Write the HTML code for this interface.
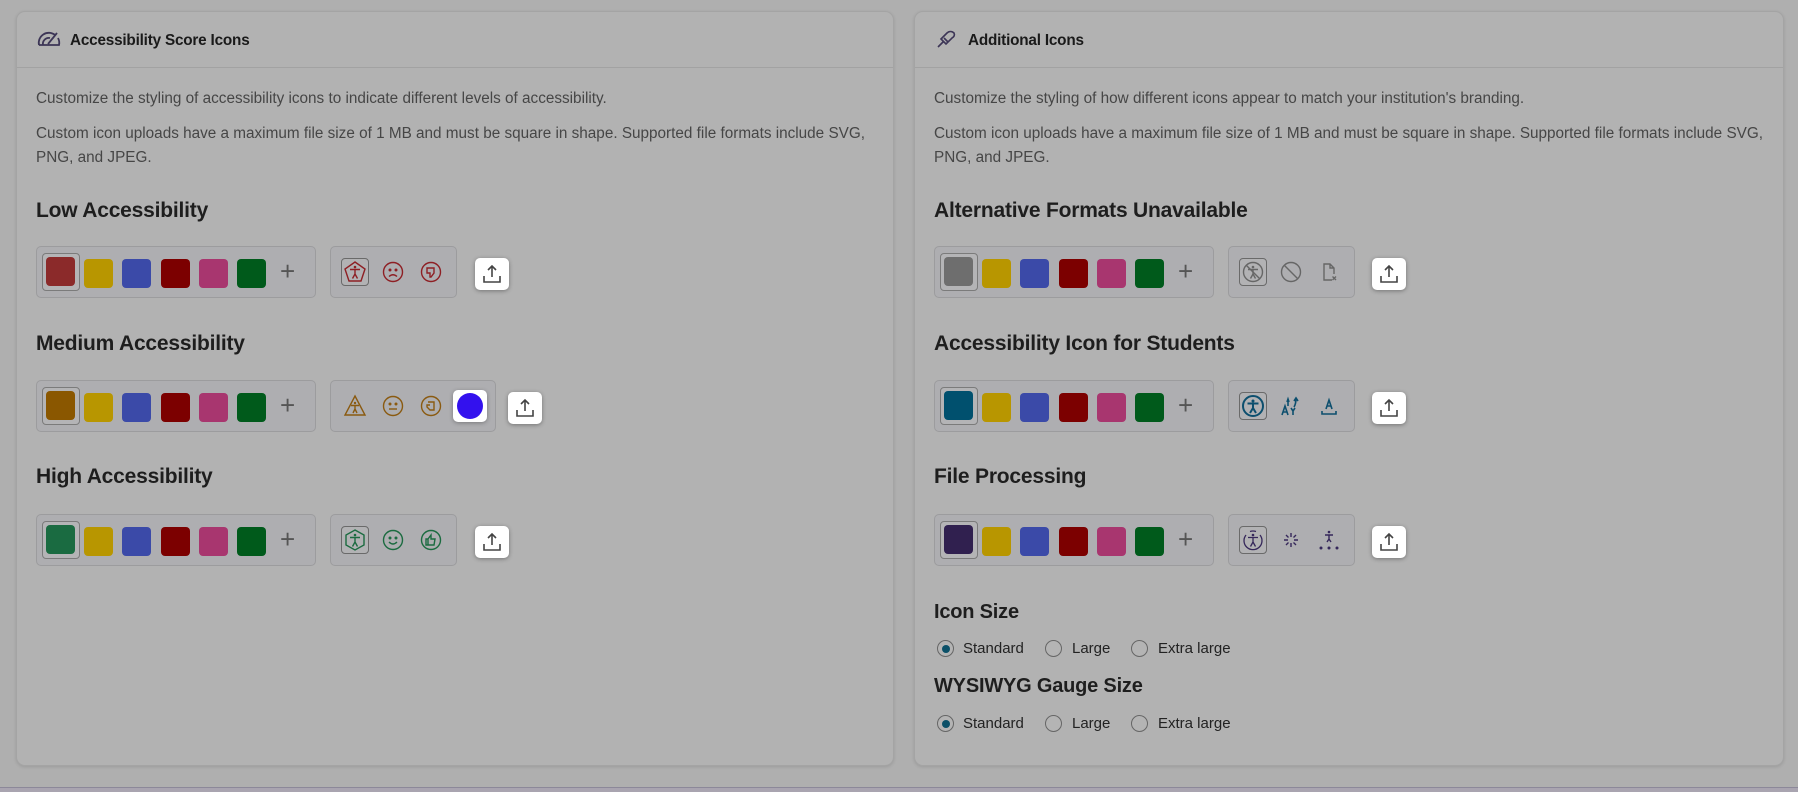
<!DOCTYPE html>
<html><head><meta charset="utf-8"><style>
*{box-sizing:border-box;margin:0;padding:0}
body{width:1798px;height:792px;background:#afafaf;font-family:"Liberation Sans",sans-serif;position:relative;overflow:hidden}
.card{position:absolute;top:11px;height:755px;background:#b2b2b2;border:1px solid #a4a4a4;border-radius:9px;box-shadow:0 1px 3px rgba(0,0,0,.12)}
.hdr{height:56px;border-bottom:1px solid #a2a2a2;position:relative}
.hdr .t{position:absolute;left:53px;top:20px;font-size:15.3px;font-weight:bold;color:#1a1a1a;letter-spacing:-.2px}
.hdr svg{position:absolute;left:20px;top:17px}
.a{position:absolute;color:#464646;font-size:15.3px;line-height:24px}
.h{position:absolute;font-size:21px;font-weight:bold;color:#1e1e1e;letter-spacing:-.2px}
.row{position:absolute;height:52px;border:1.5px solid #9c9c9e;border-radius:5px;background:#aeaeb1}
.sw{position:absolute;top:12px;width:29px;height:29px;border-radius:4px}
.sel{position:absolute;left:5px;top:6px;width:38px;height:38px;border:1.5px solid #7b7b7b;border-radius:4px;background:#b4b4b6}
.plus{position:absolute;top:9px;font-size:26px;color:#555;font-weight:300}
.up{position:absolute;width:34px;height:32px;background:#fff;border-radius:5px;box-shadow:0 1px 4px rgba(0,0,0,.35)}
.up svg{position:absolute;left:8px;top:6px}
.ic{position:absolute;top:13px}
.isel{position:absolute;left:10px;top:12px;width:28px;height:28px;border:1.5px solid #6a6a6a;border-radius:4px;background:#b2b2b4}
.rad{position:absolute;font-size:15px;color:#222;height:20px}
.rad span{position:absolute;top:0;line-height:18px;white-space:nowrap}
.rad i{position:absolute;top:0;width:17px;height:17px;border:1px solid #666;border-radius:50%;background:#b4b4b4}
.rad i.on::after{content:"";position:absolute;left:3.5px;top:3.5px;width:8px;height:8px;border-radius:50%;background:#0b5068}
.bot{position:absolute;left:0;top:787px;width:1798px;height:5px;background:#a9a4b0;border-top:1px solid #8c8899}
</style></head><body>

<div class="card" style="left:16px;width:878px">
 <div class="hdr"><svg width="24" height="18" viewBox="0 0 24 18" fill="none" stroke="#3c3556" stroke-width="1.8"><path d="M2 16 A10 10 0 0 1 18 6"/><path d="M6 16 A6 6 0 0 1 13 9"/><path d="M11 15 L20 4"/><path d="M21 9 A10 10 0 0 1 22 16 L2 16"/></svg><div class="t">Accessibility Score Icons</div></div>
</div>
<div class="card" style="left:914px;width:870px">
 <div class="hdr"><svg width="22" height="20" viewBox="0 0 22 20" fill="none" stroke="#3c3556" stroke-width="1.6"><path d="M3 18 L8 13 M6 10 L12 4 C14 2 17 2 19 4 C20 6 19 8 17 9 L11 15 Z M9 9 L13 13"/></svg><div class="t">Additional Icons</div></div>
</div>

<div class="a" style="left:36px;top:87px">Customize the styling of accessibility icons to indicate different levels of accessibility.</div>
<div class="a" style="left:36px;top:122px;width:850px">Custom icon uploads have a maximum file size of 1 MB and must be square in shape. Supported file formats include SVG, PNG, and JPEG.</div>
<div class="a" style="left:934px;top:87px">Customize the styling of how different icons appear to match your institution's branding.</div>
<div class="a" style="left:934px;top:122px;width:845px">Custom icon uploads have a maximum file size of 1 MB and must be square in shape. Supported file formats include SVG, PNG, and JPEG.</div>

<div class="h" style="left:36px;top:199px">Low Accessibility</div>
<div class="h" style="left:36px;top:332px">Medium Accessibility</div>
<div class="h" style="left:36px;top:465px">High Accessibility</div>
<div class="h" style="left:934px;top:199px">Alternative Formats Unavailable</div>
<div class="h" style="left:934px;top:332px">Accessibility Icon for Students</div>
<div class="h" style="left:934px;top:465px">File Processing</div>
<div class="h" style="left:934px;top:601px;font-size:20px">Icon Size</div>
<div class="h" style="left:934px;top:675px;font-size:20px">WYSIWYG Gauge Size</div>

<div id="rows"></div>

<div class="rad" style="left:937px;top:640px"><i class="on" style="left:0"></i><span style="left:26px">Standard</span><i style="left:108px"></i><span style="left:135px">Large</span><i style="left:194px"></i><span style="left:221px">Extra large</span></div>
<div class="rad" style="left:937px;top:715px"><i class="on" style="left:0"></i><span style="left:26px">Standard</span><i style="left:108px"></i><span style="left:135px">Large</span><i style="left:194px"></i><span style="left:221px">Extra large</span></div>

<div class="bot"></div>

<script>
const others=['#b89600','#3b4aa8','#7c0000','#a8366f','#005a1b'];
const upSvg='<svg width="18" height="20" viewBox="0 0 18 20" fill="none" stroke="#444" stroke-width="1.6"><path d="M9 13 V2 M5 6 L9 2 L13 6 M1 12 V18 H17 V12"/></svg>';
function circ(c,inner){return `<svg width="24" height="24" viewBox="0 0 24 24" fill="none" stroke="${c}" stroke-width="1.4"><circle cx="12" cy="12" r="9.5"/>${inner}</svg>`}
const person=c=>`<circle cx="12" cy="7" r="1.3" fill="${c}" stroke="none"/><path d="M7 9.5 H17 M12 9.5 V14 M12 14 L9.5 18.5 M12 14 L14.5 18.5"/>`;
const rows=[
 {x:36,y:246,first:'#8b2a2a',ic:'#8e1f24',icons:[
  c=>`<svg width="24" height="24" viewBox="0 0 24 24" fill="none" stroke="${c}" stroke-width="1.4"><path d="M12 2 L22 9 L18 21 H6 L2 9 Z"/>${person(c)}</svg>`,
  c=>circ(c,`<circle cx="9" cy="10" r=".8" fill="${c}"/><circle cx="15" cy="10" r=".8" fill="${c}"/><path d="M8 16.5 Q12 13 16 16.5"/>`),
  c=>circ(c,`<path d="M8 8 H15 V13 L12 17 H11 V13 H8 Z"/>`)],up:475,box:127,sel:true},
 {x:36,y:380,first:'#8a5700',ic:'#8a5a10',icons:[
  c=>`<svg width="24" height="24" viewBox="0 0 24 24" fill="none" stroke="${c}" stroke-width="1.4"><path d="M12 2 L22 21 H2 Z"/><circle cx="12" cy="9" r="1.2" fill="${c}" stroke="none"/><path d="M8 11.5 H16 M12 11.5 V15 M12 15 L10 19 M12 15 L14 19"/></svg>`,
  c=>circ(c,`<circle cx="9" cy="10" r=".8" fill="${c}"/><circle cx="15" cy="10" r=".8" fill="${c}"/><path d="M8 15 H16"/>`),
  c=>circ(c,`<path d="M9 8 H15 V16 H11 L8 13 V11 H11"/>`)],up:508,box:166,sel:false,blue:true},
 {x:36,y:514,first:'#1a6b41',ic:'#1b6b40',icons:[
  c=>`<svg width="24" height="24" viewBox="0 0 24 24" fill="none" stroke="${c}" stroke-width="1.4"><path d="M12 2 L21 7 V17 L12 22 L3 17 V7 Z"/>${person(c)}</svg>`,
  c=>circ(c,`<circle cx="9" cy="10" r=".8" fill="${c}"/><circle cx="15" cy="10" r=".8" fill="${c}"/><path d="M8 14 Q12 18 16 14"/>`),
  c=>circ(c,`<path d="M7 11 H9 V17 H7 Z M9 11 L12 7 V11 H16 L15 17 H9"/>`)],up:475,box:127,sel:true},
 {x:934,y:246,first:'#6e6e6e',ic:'#666',icons:[
  c=>circ(c,person(c)+`<path d="M5 5 L19 19"/>`),
  c=>circ(c,`<path d="M5.5 5.5 L18.5 18.5"/>`),
  c=>`<svg width="24" height="24" viewBox="0 0 24 24" fill="none" stroke="${c}" stroke-width="1.4"><path d="M15 20 H7 V4 H13 L17 8 V14 M13 4 V8 H17 M15.5 16.5 L19 20 M19 16.5 L15.5 20"/></svg>`],up:1372,box:127,sel:true},
 {x:934,y:380,first:'#00506e',ic:'#0d4f6e',icons:[
  c=>`<svg width="24" height="24" viewBox="0 0 24 24" fill="none" stroke="${c}" stroke-width="2"><circle cx="12" cy="12" r="10"/><circle cx="12" cy="7" r="1.5" fill="${c}" stroke="none"/><path d="M6.5 9.5 H17.5 M12 9.5 V14 M12 14 L9 19 M12 14 L15 19"/></svg>`,
  c=>`<svg width="24" height="24" viewBox="0 0 24 24" fill="none" stroke="${c}" stroke-width="1.6"><path d="M3 21 L6 12 L9 21 M4 18 H8 M12 14 L14 17 V21 M16 14 L14 17 M8 8 L9 5 L10 8 M9 5 V12 M15 7 L17 4 L19 7 M17 4 Q17 10 15 13"/></svg>`,
  c=>`<svg width="24" height="24" viewBox="0 0 24 24" fill="none" stroke="${c}" stroke-width="1.6"><path d="M9 15 L12 6 L15 15 M10 12 H14 M5 17 V20 H19 V17"/></svg>`],up:1372,box:127,sel:true},
 {x:934,y:514,first:'#30204f',ic:'#35275a',icons:[
  c=>`<svg width="24" height="24" viewBox="0 0 24 24" fill="none" stroke="${c}" stroke-width="1.3"><path d="M5 7 A9 9 0 1 0 19 7" /><path d="M9 3.5 A9 9 0 0 1 15 3.5"/>${person(c)}</svg>`,
  c=>`<svg width="24" height="24" viewBox="0 0 24 24" fill="none" stroke="${c}" stroke-width="1.4"><path d="M12 5 V9 M12 15 V19 M5 12 H9 M15 12 H19 M7 7 L9.5 9.5 M14.5 14.5 L17 17 M17 7 L14.5 9.5 M9.5 14.5 L7 17"/></svg>`,
  c=>`<svg width="24" height="24" viewBox="0 0 24 24" fill="none" stroke="${c}" stroke-width="1.4"><circle cx="12" cy="4" r="1.3" fill="${c}" stroke="none"/><path d="M8 7 H16 M12 7 V11 M12 11 L10 14 M12 11 L14 14"/><circle cx="4" cy="20" r="1.5" fill="${c}" stroke="none"/><circle cx="12" cy="20" r="1.5" fill="${c}" stroke="none"/><circle cx="20" cy="20" r="1.5" fill="${c}" stroke="none"/></svg>`],up:1372,box:127,sel:true},
];
let h='';
for(const r of rows){
 h+=`<div class="row" style="left:${r.x}px;top:${r.y}px;width:280px"><div class="sel"></div>`;
 h+=`<div class="sw" style="left:9px;top:10px;background:${r.first}"></div>`;
 others.forEach((c,i)=>{h+=`<div class="sw" style="left:${47+i*38.3}px;background:${c}"></div>`});
 h+=`<div class="plus" style="left:243px">+</div></div>`;
 const bx=r.x+294;
 h+=`<div class="row" style="left:${bx}px;top:${r.y}px;width:${r.box}px">`;
 if(r.sel) h+=`<div class="isel" style="top:11px"></div>`;
 r.icons.forEach((f,i)=>{h+=`<div class="ic" style="left:${12+i*38}px">${f(r.ic)}</div>`});
 if(r.blue) h+=`<div style="position:absolute;left:122px;top:9px;width:34px;height:32px;background:#fff;border-radius:5px;box-shadow:0 1px 4px rgba(0,0,0,.3)"><div style="position:absolute;left:4px;top:3px;width:26px;height:26px;border-radius:50%;background:#3311ee"></div></div>`;
 h+=`</div>`;
 h+=`<div class="up" style="left:${r.up}px;top:${r.y+12}px">${upSvg}</div>`;
}
document.getElementById('rows').innerHTML=h;
</script>
</body></html>
